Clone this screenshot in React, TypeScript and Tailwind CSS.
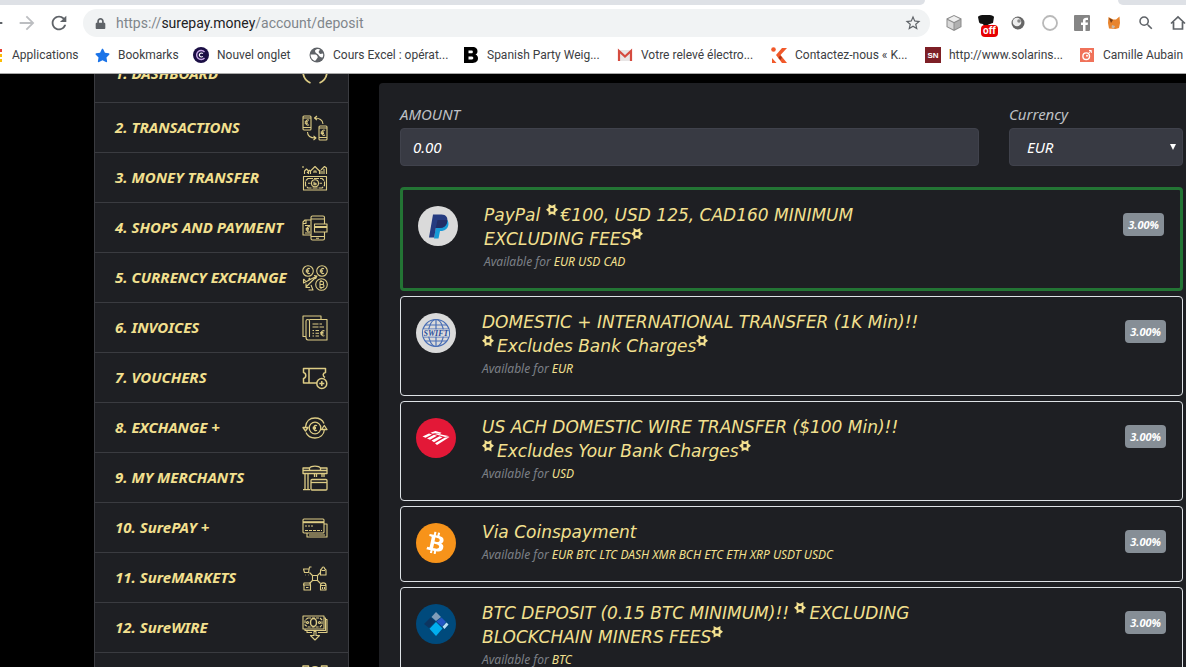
import { useState, ReactNode } from "react";
import { FaBtc, FaStar, FaLock } from "react-icons/fa";
import { MdArrowBack, MdArrowForward, MdRefresh, MdSearch, MdStarBorder } from "react-icons/md";

type Bookmark = {
  label: string;
  width: string;
  icon: ReactNode;
};

type MenuItem = {
  label: string;
  icon: ReactNode;
};

type Method = {
  id: string;
  lines: string[]; // "*" is drawn as a raised star
  currencies: string;
  fee: string;
  logo: ReactNode;
};

const bookmarks: Bookmark[] = [
  {
    label: "Bookmarks",
    width: "w-[99px]",
    icon: <FaStar size={15} color="#1a73e8" />,
  },
  {
    label: "Nouvel onglet",
    width: "w-[116px]",
    icon: (
      <svg viewBox="0 0 16 16" width="16" height="16">
        <circle cx="8" cy="8" r="8" fill="#1b0f45" />
        <path d="M11.5 5A4.5 4.5 0 1 0 11.5 11" fill="none" stroke="#c9a9e6" strokeWidth="1.4" />
        <path d="M9.8 6.6A2 2 0 1 0 9.8 9.4" fill="none" stroke="#fff" strokeWidth="1.2" />
      </svg>
    ),
  },
  {
    label: "Cours Excel : opérat...",
    width: "w-[154px]",
    icon: (
      <svg viewBox="0 0 16 16" width="16" height="16">
        <circle cx="8" cy="8" r="7.5" fill="#5f6368" />
        <path d="M1.500 7.500C4 8 7 6.500 8 8.500S9 10 8 11.500 6.500 13.500 6 14C3.500 13 1.500 11 1.500 7.500Z" fill="#fff" />
        <path d="M6 3.500C8 1.500 10 2 11 2.500L9.500 5 11 7 14 6.500C14.500 8 14 9.500 13.500 10.500 12 11 10.500 9.500 9.500 8S6 6.500 6 3.500Z" fill="#fff" />
      </svg>
    ),
  },
  {
    label: "Spanish Party Weig...",
    width: "w-[154px]",
    icon: (
      <svg viewBox="0 0 16 16" width="16" height="16">
        <path
          fillRule="evenodd"
          d="M1 0H9.500C13 0 14.500 2 14.500 4.200 14.500 6 13.500 7 12.500 7.500 14 8 15 9.500 15 11.300 15 14 13 16 9.800 16H1ZM5.500 3.500V6.300H8.700C10.300 6.300 10.300 3.500 8.700 3.500ZM5.500 9.500V12.500H9C10.800 12.500 10.800 9.500 9 9.500Z"
        />
      </svg>
    ),
  },
  {
    label: "Votre relevé électro...",
    width: "w-[154px]",
    icon: (
      <svg viewBox="0 0 16 16" width="16" height="16">
        <rect x="1" y="3" width="14" height="11" fill="#e8e6e6" />
        <path d="M2 14V4L8 9.500 14 4V14" fill="none" stroke="#d54b3f" strokeWidth="2.200" />
      </svg>
    ),
  },
  {
    label: "Contactez-nous « K...",
    width: "w-[154px]",
    icon: (
      <svg viewBox="0 0 16 16" width="16" height="16" fill="#f1592a">
        <circle cx="2.500" cy="2.500" r="2.300" />
        <path d="M11 1H16L9.500 8 16 16H11L5 8Z" />
        <path d="M1 11L5.500 16H1Z" />
        <path d="M7.500 11L9 8.600 11 10.500 9.500 13Z" fill="#a93415" />
      </svg>
    ),
  },
  {
    label: "http://www.solarins...",
    width: "w-[154px]",
    icon: (
      <svg viewBox="0 0 16 16" width="16" height="16">
        <rect width="16" height="16" fill="#7d1f26" />
        <text x="8" y="11" fontSize="8" fontWeight="700" fill="#fff" textAnchor="middle" fontFamily="Liberation Sans, sans-serif">
          SN
        </text>
      </svg>
    ),
  },
  {
    label: "Camille Aubain",
    width: "w-[120px]",
    icon: (
      <svg viewBox="0 0 16 16" width="16" height="16">
        <rect x="1" y="1" width="14" height="14" fill="#f0725a" />
        <circle cx="7.200" cy="9.200" r="3.300" fill="none" stroke="#fff" strokeWidth="1.400" />
        <circle cx="8" cy="8.800" r="1" fill="#fff" />
        <path d="M9.500 6.500L12 3.500M10 3.500H12.300V6" fill="none" stroke="#fff" strokeWidth="1" />
      </svg>
    ),
  },
];

function MenuIcon({ children }: { children: ReactNode }) {
  return (
    <svg
      viewBox="0 0 26 26"
      className="h-[26px] w-[26px] shrink-0"
      fill="none"
      stroke="#ddcc85"
      strokeWidth="1.1"
      strokeLinejoin="round"
    >
      {children}
    </svg>
  );
}

function Euro({ x, y }: { x: number; y: number }) {
  return (
    <path
      transform={`translate(${x} ${y})`}
      d="M2 -2.300C0.500 -3.200 -1.200 -2.300 -1.200 0S0.500 3.200 2 2.300M-2.300 -0.700H1M-2.300 0.700H1"
    />
  );
}

const menuItems: MenuItem[] = [
  {
    label: "1. DASHBOARD",
    icon: <path d="M5 3A12 12 0 0 0 8.500 23M21 3A12 12 0 0 1 17.500 23" strokeWidth="1.800" />,
  },
  {
    label: "2. TRANSACTIONS",
    icon: (
      <>
        <rect x="1" y="1" width="8" height="14" rx="1" />
        <path d="M1 3H9M1 12.500H9" />
        <Euro x={5} y={7.500} />
        <rect x="17" y="11" width="8" height="14" rx="1" />
        <path d="M17 13H25M17 22.500H25" />
        <Euro x={21} y={17.700} />
        <path d="M21 9C21 5 17 3 13 3M15 1L12.500 3 15 5.200M5.500 17C5.500 21 9 23 13.500 23M11.500 20.800L14 23 11.500 25" />
      </>
    ),
  },
  {
    label: "3. MONEY TRANSFER",
    icon: (
      <>
        <rect x="1.500" y="11.500" width="23" height="13.500" />
        <path d="M6 13.500H20L22.500 16V20.500L20 23H6L3.500 20.500V16Z" strokeDasharray="5 1" />
        <circle cx="13" cy="18.200" r="3.500" />
        <path d="M12 16.700V19.700H14V18.200H12M6 18.200H8.500M17.500 18.200H20" />
        <path d="M1 1V3M2.500 9V6L4.500 4 6.500 6V9M5 8L8 5M8.500 9V6L13 1.500 17.500 6V9M12 8V6H14V8M18 5V9M19 5L22.500 1.500 24.500 3V9M22 4V9M20 9V6" />
      </>
    ),
  },
  {
    label: "4. SHOPS AND PAYMENT",
    icon: (
      <>
        <rect x="9" y="1" width="13.500" height="24" rx="1.500" />
        <path d="M9 4H22M9 21.500H22M14 23.200H17" />
        <rect x="12.500" y="9" width="12.500" height="8" fill="#1e1f23" />
        <path d="M12.500 12H25" strokeWidth="2" />
        <path d="M9 5H3L1 7V20H9M1 8.500H4V5.500M3 10.500H8M3 18H8" />
        <Euro x={6} y={14.300} />
      </>
    ),
  },
  {
    label: "5. CURRENCY EXCHANGE",
    icon: (
      <>
        <circle cx="6" cy="6" r="5.300" />
        <Euro x={6} y={6} />
        <circle cx="20" cy="6" r="5.300" />
        <Euro x={20} y={6} />
        <circle cx="19.500" cy="19.500" r="5.800" />
        <path d="M18 16.500V22.500H20.500C22.500 22.500 22.500 19.500 20.500 19.500H18M18 16.500H20.300C22 16.500 22 19.500 20.300 19.500M19 15V16.500M19 22.500V24" />
        <path d="M1.500 14V18L15 11 12 10.500M1.500 14L3.500 16M15 11L4 22M15 11L13.500 14M4 18.500V22.500H8M6.500 25H11L9 20M6.500 14.500L8 13" />
      </>
    ),
  },
  {
    label: "6. INVOICES",
    icon: (
      <>
        <path d="M4 21.500H1V1H19V4" />
        <path d="M7.500 4.500H25V25H6C4.500 25 4 24 4 22V6C4 4 7.500 4 7.500 6V22" />
        <path d="M10.500 9H20M10.500 12H22" strokeDasharray="6 1" />
        <path d="M10.500 15.500H12M13.500 15.500H17M10.500 18.300H12M13.500 18.300H17M10.500 21H12M13.500 21H17" />
        <Euro x={20.500} y={18.300} />
      </>
    ),
  },
  {
    label: "7. VOUCHERS",
    icon: (
      <g strokeWidth="1.500">
        <path d="M15 18H1.500V13.500C4.500 13 4.500 8 1.500 7.500V3.500H23.500V7.500C20.500 8 20.500 11 23 12.500M7 3.500V18" />
        <circle cx="19.800" cy="18.500" r="5" />
        <path d="M19.800 16V21M17.300 18.500H22.300" />
      </g>
    ),
  },
  {
    label: "8. EXCHANGE +",
    icon: (
      <g strokeWidth="1.300">
        <circle cx="13" cy="13" r="5.800" />
        <Euro x={13} y={13} />
        <path d="M3.500 12C4 6 8 3 13 3 17 3 20.500 5 22 8.500M22.500 14C22 20 18 23 13 23 9 23 5.500 21 4 17.500" />
        <path d="M1 12.500H6L3.500 16ZM19.500 14.500H25L22.300 10.500Z" />
      </g>
    ),
  },
  {
    label: "9. MY MERCHANTS",
    icon: (
      <g strokeWidth="1.300">
        <path d="M1 3H7.500C9 0.500 17 0.500 18.500 3H25V8.500H1ZM7.500 3V5.500H18.500V3M1 5.500H7.500M18.500 5.500H25" />
        <path d="M3 8.500V24M6 8.500V24M1 24.700H8" />
        <path d="M12.500 9V12M14.500 9V12M20 9V12M22 9V12" />
        <rect x="9" y="14.500" width="16" height="10.500" rx="1" />
        <path d="M9 17.500H25" />
      </g>
    ),
  },
  {
    label: "10. SurePAY +",
    icon: (
      <>
        <rect x="1" y="4" width="21" height="14" rx="1" />
        <path d="M1 7.200H22" strokeWidth="2" />
        <path d="M3 11H12" strokeDasharray="2 1" />
        <path d="M3 15.500H20" strokeDasharray="3 1" />
        <path d="M22 9H25V22H5V18M7 20H23" />
      </>
    ),
  },
  {
    label: "11. SureMARKETS",
    icon: (
      <>
        <rect x="10.500" y="10.500" width="5" height="5" />
        <path d="M10.500 10.500L7.500 7.500M15.500 10.500L18.500 7.500M10.500 15.500L7.500 18.500M15.500 15.500L18.500 18.500" />
        <path d="M9.500 2H7.500L6.500 7.500H2.500L1.500 4H7M3 10H3.500M6 10H6.500" />
        <path d="M18.500 10V5L20 3.500C20 1.500 22.500 1.500 22.500 3.500L24 5V10ZM19.500 5.500H23" />
        <path d="M2 18H8L8.500 20H1.500ZM2 20V25H8.500V20M4 22.500H6.500" />
        <path d="M18.500 20.500C18.500 17 24 17 24 20.500V25H18.500ZM18.500 20.500H24M20.500 22V24M22.500 22V24" />
      </>
    ),
  },
  {
    label: "12. SureWIRE",
    icon: (
      <>
        <rect x="1" y="1" width="21" height="13" />
        <path d="M22 3H23.500V15.500H3V14M23.500 4.500H25V17.500H16M5 15.500V17.500H10" />
        <path d="M6 3H18L20 5V10L18 12H6L3 10V5Z" strokeDasharray="3 1" />
        <ellipse cx="11.500" cy="7.500" rx="3" ry="4" strokeWidth="1.500" />
        <circle cx="5.500" cy="7.500" r="1" />
        <circle cx="17.500" cy="7.500" r="1" />
        <path d="M12 16.500H14V20.500H17.500L13 25 8.500 20.500H12Z" />
      </>
    ),
  },
  {
    label: "13.",
    icon: (
      <path d="M1 1H6.500V6H1ZM19.500 1H25V6H19.500ZM9 5C10 0.500 16 0.500 17 5M6.500 3H19.500" strokeWidth="1.500" />
    ),
  },
];

const methods: Method[] = [
  {
    id: "paypal",
    lines: ["PayPal *€100, USD 125, CAD160 MINIMUM", "EXCLUDING FEES*"],
    currencies: "EUR USD CAD",
    fee: "3.00%",
    logo: (
      <svg viewBox="0 0 40 40" width="40" height="40">
        <circle cx="20" cy="20" r="20" fill="#dadada" />
        <path d="M19 14H29C31.500 15.500 31.500 24 24 25H22L20.500 32.500H16Z" fill="#179bd7" />
        <path d="M15 8.500H23.500C28 8.500 30.500 11.500 29 16.500 28 20.500 25 22 21.500 22H17.800L16.200 31.500H11Z" fill="#253b80" />
        <path d="M19.500 14H29.200C29.500 18.500 26.500 22 21.500 22H17.800Z" fill="#222d65" />
      </svg>
    ),
  },
  {
    id: "swift",
    lines: ["DOMESTIC + INTERNATIONAL TRANSFER (1K Min)!!", "*Excludes Bank Charges*"],
    currencies: "EUR",
    fee: "3.00%",
    logo: (
      <svg viewBox="0 0 40 40" width="40" height="40">
        <circle cx="20" cy="20" r="20" fill="#dadada" />
        <g fill="none" stroke="#4a6fb5" strokeWidth="1.200">
          <circle cx="20" cy="20" r="13.500" />
          <ellipse cx="20" cy="20" rx="7.500" ry="13.500" />
          <path d="M20 6.500V33.500M9 12H31M9 28H31M7 16H33M7 24H33" />
        </g>
        <rect x="7" y="16.500" width="26" height="7" fill="#dadada" />
        <text x="20" y="23" fontSize="8" fontWeight="700" fontStyle="italic" fill="#2c4f9e" textAnchor="middle" fontFamily="Liberation Serif, serif">
          SWIFT
        </text>
      </svg>
    ),
  },
  {
    id: "ach",
    lines: ["US ACH DOMESTIC WIRE TRANSFER ($100 Min)!!", "*Excludes Your Bank Charges*"],
    currencies: "USD",
    fee: "3.00%",
    logo: (
      <svg viewBox="0 0 40 40" width="40" height="40">
        <circle cx="20" cy="20" r="20" fill="#e31837" />
        <path d="M6.500 18.500L13 15.500 16 16.500 9.500 19.800ZM11 20.500L18 16.800 21 17.800 14 21.700ZM15.500 22.500L23.500 18.200 26.500 19.200 18 24.200ZM19 25.200L29 19.600 33.500 19 21 27ZM14.500 14.800L19.500 13 25.500 14.800 24 16 20 14.900 16.500 15.700ZM18.500 16L20.500 15.500 33.500 18.200 29 18.900Z" fill="#fff" />
      </svg>
    ),
  },
  {
    id: "coins",
    lines: ["Via Coinspayment"],
    currencies: "EUR BTC LTC DASH XMR BCH ETC ETH XRP USDT USDC",
    fee: "3.00%",
    logo: (
      <span className="flex h-10 w-10 items-center justify-center rounded-full bg-[#f7931a]">
        <FaBtc size={22} color="#fff" className="rotate-12" />
      </span>
    ),
  },
  {
    id: "btc",
    lines: ["BTC DEPOSIT (0.15 BTC MINIMUM)!! *EXCLUDING", "BLOCKCHAIN MINERS FEES*"],
    currencies: "BTC",
    fee: "3.00%",
    logo: (
      <svg viewBox="0 0 40 40" width="40" height="40">
        <circle cx="20" cy="20" r="20" fill="#004a7c" />
        <path d="M20 8L25 13 20 17 15.500 13Z" fill="#7f9db9" />
        <path d="M14.500 13.500L19.500 17.500 13 24 8 20Z" fill="#0d3560" />
        <path d="M25.500 13.500L30 18 26 22.500 20.500 17.500Z" fill="#2456c4" />
        <path d="M30.500 18.500L32.500 20.500 28.500 25 26.500 22.800Z" fill="#b8dff5" />
        <path d="M20 18L26.500 24.500 20 32 13.500 24.800Z" fill="#00aeef" />
      </svg>
    ),
  },
];

function RaisedStar() {
  return (
    <svg viewBox="0 0 12 12" width="12" height="12" className="mr-[3px] inline align-[5px]" aria-hidden="true">
      <path
        d="M2.500 0L6 1.800 9.500 0 9.300 3.500 12 5.800 9.300 8 9.500 11.600 6 9.800 2.500 11.600 2.700 8 0 5.800 2.700 3.500ZM4.300 4.100V7.500H7.700V4.100Z"
        fill="currentColor"
        fillRule="evenodd"
      />
    </svg>
  );
}

function TitleLine({ text }: { text: string }) {
  return (
    <span className="block h-6 whitespace-nowrap">
      {text.split("*").map((part, i) => (
        <span key={i}>
          {i > 0 && <RaisedStar />}
          {part}
        </span>
      ))}
    </span>
  );
}

function BrowserBar() {
  return (
    <header className="shrink-0 overflow-hidden border-b border-[#a9a9a9] bg-white font-[Roboto,sans-serif]">
      <div className="flex h-[5px] justify-between">
        <div className="w-[78%] rounded-br-lg bg-[#dee1e6]" />
        <div className="w-[68px] rounded-bl-lg bg-[#dee1e6]" />
      </div>

      <div className="flex h-9 items-center gap-4 text-[#5f6368]">
        <button type="button" aria-label="Back" className="-ml-[13px]">
          <MdArrowBack size={22} className="-m-[3px]" />
        </button>
        <button type="button" aria-label="Forward" className="text-[#bcbec1]">
          <MdArrowForward size={22} className="-m-[3px]" />
        </button>
        <button type="button" aria-label="Reload">
          <MdRefresh size={22} className="-m-[3px]" />
        </button>
        <div className="flex h-7 flex-1 items-center gap-[10px] rounded-full bg-[#f1f3f4] px-3">
          <FaLock size={11} />
          <p className="flex-1 text-sm text-[#80868b]">
            https://<span className="text-[#202124]">surepay.money</span>/account/deposit
          </p>
          <MdStarBorder size={18} className="-mr-1" />
        </div>
        <svg viewBox="0 0 16 16" width="16" height="16">
          <path d="M8 0L15.500 3.500V12L8 16 0.500 12V3.500Z" fill="#8c8c8c" />
          <path d="M8 1L14 4 8 7 2 4Z" fill="#efefef" />
          <path d="M1.500 5L7.500 8V14.500L1.500 11.500Z" fill="#d8d8d8" />
          <path d="M14.500 5L8.500 8V14.500L14.500 11.500Z" fill="#b0b0b0" />
        </svg>
        <span className="relative">
          <svg viewBox="0 0 16 16" width="16" height="16">
            <path d="M0 2C1 -1 15 -1 16 2L15 8C12 9 9 9 7 13L5 9C3 9 1 8 1 7Z" fill="#111" />
          </svg>
          <span className="absolute left-[3px] top-[10px] rounded-sm bg-[#e60000] px-[2px] text-[10px] font-bold leading-3 text-white">
            off
          </span>
        </span>
        <svg viewBox="0 0 16 16" width="16" height="16">
          <circle cx="8" cy="8" r="6.500" fill="#666" />
          <circle cx="7" cy="7" r="4.300" fill="#ededed" />
          <circle cx="9" cy="6" r="1.800" fill="#888" />
        </svg>
        <svg viewBox="0 0 16 16" width="16" height="16">
          <circle cx="8" cy="8" r="7" fill="none" stroke="#b9b9b9" strokeWidth="1.800" />
        </svg>
        <svg viewBox="0 0 16 16" width="16" height="16">
          <rect width="16" height="16" rx="1" fill="#858585" />
          <path d="M9 16V10H7V7.500H9V5.500C9 3.500 10.500 2.700 12.200 2.700H14V5H12.500C11.700 5 11.500 5.500 11.500 6V7.500H14L13.700 10H11.500V16Z" fill="#fff" />
        </svg>
        <svg viewBox="0 0 16 16" width="16" height="16">
          <path d="M2.500 2L7 4.500H10L13.500 1.500 14 8 13 13 9.500 14 3 13.500 2 8Z" fill="#e8842d" />
          <path d="M3 3L7 5 5 8Z" fill="#763d16" />
          <path d="M6 10L9 11 8 13.500 5.500 12.500Z" fill="#c8b8a8" />
        </svg>
        <MdSearch size={18} className="-m-px" />
        <svg viewBox="0 0 16 16" width="16" height="16" fill="none" stroke="currentColor" strokeWidth="1.700">
          <path d="M1 8.500L8 2 15 8.500M3.500 7V14H12.500V7" />
        </svg>
      </div>

      <nav className="flex h-8 items-center whitespace-nowrap pb-1 text-xs text-[#3c4043]">
        <a href="#apps" className="flex w-[94px] shrink-0 items-center gap-[10px]">
          <svg viewBox="0 0 2 14" width="2" height="14" className="shrink-0">
            <path d="M0 1H2V4H0Z" fill="#ea4335" />
            <path d="M0 6H2V9H0ZM0 11H2V14H0Z" fill="#fbbc05" />
          </svg>
          Applications
        </a>
        {bookmarks.map((item) => (
          <a key={item.label} href="#bookmark" className={`flex shrink-0 items-center gap-2 ${item.width}`}>
            <span className="flex w-4 shrink-0 justify-center">{item.icon}</span>
            {item.label}
          </a>
        ))}
      </nav>
    </header>
  );
}

function Sidebar() {
  return (
    <nav className="-mt-[26px] w-[255px] shrink-0 border-x border-[#3a3b40] bg-[#1e1f23]">
      {menuItems.map((item, i) => (
        <a
          key={item.label}
          href="#menu"
          className={`flex items-center justify-between border-b border-[#3a3b40] px-5 text-[15px] font-bold italic text-[#f3e08f] ${
            i === 0 ? "h-[55px] pb-1" : "h-[50px]"
          }`}
        >
          {item.label}
          <MenuIcon>{item.icon}</MenuIcon>
        </a>
      ))}
    </nav>
  );
}

export default function App() {
  const [amount, setAmount] = useState<string>("0.00");
  const [currency, setCurrency] = useState<string>("EUR");
  const [selected, setSelected] = useState<string>("paypal");

  return (
    <div className="flex h-screen flex-col overflow-hidden bg-black">
      <BrowserBar />

      <div className="flex min-h-0 flex-1 items-start overflow-hidden pl-[94px] font-['Noto_Sans',sans-serif]">
        <Sidebar />

        <main className="ml-[30px] mt-[9px] min-w-0 flex-1 rounded-tl bg-[#1e1f23] pb-5 pl-[21px] pr-[3px] pt-5">
          <form className="flex gap-[30px] italic">
            <div className="flex-1">
              <label htmlFor="amount" className="mb-[2px] block text-[15px] leading-[23px] text-[#bfc1c5]">
                AMOUNT
              </label>
              <input
                id="amount"
                type="text"
                value={amount}
                onChange={(e) => setAmount(e.target.value)}
                className="h-[38px] w-full rounded border border-[#40424c] bg-[#383a43] px-3 text-[15px] text-white focus:outline-none"
              />
            </div>
            <div className="w-[174px]">
              <label htmlFor="currency" className="mb-[2px] block text-[15px] leading-[23px] text-[#bfc1c5]">
                Currency
              </label>
              <div className="relative">
                <select
                  id="currency"
                  value={currency}
                  onChange={(e) => setCurrency(e.target.value)}
                  className="h-[38px] w-full appearance-none rounded border border-[#40424c] bg-[#383a43] px-[17px] text-[15px] text-white italic focus:outline-none"
                >
                  <option>EUR</option>
                  <option>USD</option>
                  <option>CAD</option>
                </select>
                <svg viewBox="0 0 6 6" width="6" height="6" className="pointer-events-none absolute right-[7px] top-4">
                  <path d="M0 0H6L3 6Z" fill="#fff" />
                </svg>
              </div>
            </div>
          </form>

          <div className="mt-[21px] flex flex-col gap-[5px]">
            {methods.map((method) => (
              <button
                key={method.id}
                type="button"
                onClick={() => setSelected(method.id)}
                className={`flex w-full items-start rounded pb-[15px] pl-[15px] pr-4 pt-[13px] text-left italic ${
                  selected === method.id ? "border-3 border-[#237434]" : "border border-[#dee2e6]"
                }`}
              >
                <span className="mt-[3px] shrink-0">{method.logo}</span>
                <span className="ml-[26px] flex-1">
                  <span className="block font-['DejaVu_Sans',sans-serif] text-[17px] leading-6 text-[#f3e08f]">
                    {method.lines.map((line) => (
                      <TitleLine key={line} text={line} />
                    ))}
                  </span>
                  <span className="block text-xs leading-[22px] text-[#7c8087]">
                    Available for <span className="text-[#f3e08f]">{method.currencies}</span>
                  </span>
                </span>
                <span className="mt-[10px] rounded bg-[#868e96] px-[5px] text-[11px] font-bold leading-[23px] text-white">
                  {method.fee}
                </span>
              </button>
            ))}
          </div>
        </main>
      </div>
    </div>
  );
}
